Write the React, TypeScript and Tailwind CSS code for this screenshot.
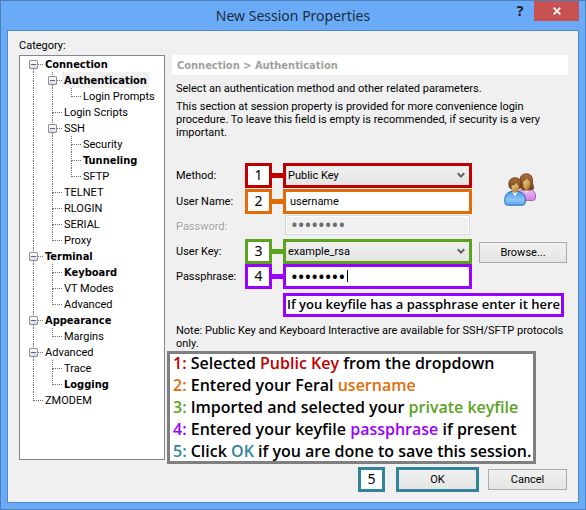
import type { ReactNode } from "react";

type Node = { label: string; bold?: boolean; selected?: boolean; children?: Node[] };
type Guide = "none" | "pass" | "tee" | "elbow";

const tree: Node[] = [
  {
    label: "Connection",
    bold: true,
    children: [
      { label: "Authentication", bold: true, selected: true, children: [{ label: "Login Prompts" }] },
      { label: "Login Scripts" },
      { label: "SSH", children: [{ label: "Security" }, { label: "Tunneling", bold: true }, { label: "SFTP" }] },
      { label: "TELNET" },
      { label: "RLOGIN" },
      { label: "SERIAL" },
      { label: "Proxy" },
    ],
  },
  {
    label: "Terminal",
    bold: true,
    children: [{ label: "Keyboard", bold: true }, { label: "VT Modes" }, { label: "Advanced" }],
  },
  { label: "Appearance", bold: true, children: [{ label: "Margins" }] },
  { label: "Advanced", children: [{ label: "Trace" }, { label: "Logging", bold: true }] },
  { label: "ZMODEM" },
];

function GuideCell({ kind, top, expandable, label }: { kind: Guide; top?: boolean; expandable?: boolean; label?: string }) {
  const upper = kind !== "none" && !top ? "border-l" : "";
  const branch = kind === "tee" || kind === "elbow" ? "border-b" : "";
  const lower = kind === "pass" || kind === "tee" ? "border-l" : "";
  return (
    <span className="relative flex w-[19px] shrink-0 flex-col pl-[9px]">
      <span className={`h-[9px] border-dotted border-[#707070] ${upper} ${branch}`} />
      <span className={`h-[7px] border-dotted border-[#707070] ${lower}`} />
      {expandable && (
        <button
          type="button"
          aria-label={`Collapse ${label}`}
          className="absolute top-1 left-[5px] flex size-[9px] items-center justify-center rounded-[1px] border border-[#919191] bg-linear-to-b from-white to-[#dcdcdc]"
        >
          <span className="h-px w-[5px] bg-[#4b63a7]" />
        </button>
      )}
    </span>
  );
}

function Branch({ nodes, guides }: { nodes: Node[]; guides: Guide[] }) {
  return (
    <ul>
      {nodes.map((node, i) => {
        const last = i === nodes.length - 1;
        return (
          <li key={node.label}>
            <div className="flex h-4">
              {guides.map((g, d) => (
                <GuideCell key={d} kind={g} />
              ))}
              <GuideCell
                kind={last ? "elbow" : "tee"}
                top={guides.length === 0 && i === 0}
                expandable={!!node.children}
                label={node.label}
              />
              <button
                type="button"
                className={`px-0.5 pt-0.5 leading-[14px] whitespace-nowrap ${node.bold ? "font-['DejaVu_Sans_Condensed',sans-serif] font-bold" : ""} ${node.selected ? "bg-[#f0f0f0]" : ""}`}
              >
                {node.label}
              </button>
            </div>
            {node.children && <Branch nodes={node.children} guides={[...guides, last ? "none" : "pass"]} />}
          </li>
        );
      })}
    </ul>
  );
}

function Step({ n, border, line }: { n: number; border: string; line: string }) {
  return (
    <div className="flex items-center">
      <span
        className={`flex h-[25px] w-[27px] items-center justify-center border-3 bg-white pb-0.5 font-['Noto_Sans',sans-serif] text-sm text-black ${border}`}
      >
        {n}
      </span>
      <span className={`h-[5px] w-[11px] ${line}`} />
    </div>
  );
}

function Dropdown({ id, value, border }: { id: string; value: string; border: string }) {
  return (
    <div className={`relative h-[25px] border-3 ${border}`}>
      <select
        id={id}
        defaultValue={value}
        className="block h-full w-full appearance-none bg-linear-to-b from-[#f0f0f0] to-[#e4e4e4] pl-0.5 outline-none"
      >
        <option>{value}</option>
      </select>
      <svg viewBox="0 0 8 7" className="pointer-events-none absolute top-1.5 right-1 h-[7px] w-2" aria-hidden="true">
        <path d="M0.8 1.2 L4 4.6 L7.2 1.2" fill="none" stroke="#606060" strokeWidth="2" />
      </svg>
    </div>
  );
}

function UsersIcon() {
  return (
    <svg viewBox="0 0 34 34" className="h-[34px] w-[34px]" aria-hidden="true">
      <defs>
        <linearGradient id="blue" x1="0" y1="0" x2="0" y2="1">
          <stop offset="0" stopColor="#4a94e0" />
          <stop offset="0.6" stopColor="#8cc6f6" />
          <stop offset="1" stopColor="#5aa2e6" />
        </linearGradient>
        <linearGradient id="pink" x1="0" y1="0" x2="0" y2="1">
          <stop offset="0" stopColor="#eebcf2" />
          <stop offset="1" stopColor="#cc80e0" />
        </linearGradient>
        <linearGradient id="face" x1="0" y1="0" x2="0.6" y2="1">
          <stop offset="0" stopColor="#f6dc9c" />
          <stop offset="1" stopColor="#b98430" />
        </linearGradient>
        <linearGradient id="hair" x1="0" y1="0" x2="0" y2="1">
          <stop offset="0" stopColor="#a8703e" />
          <stop offset="1" stopColor="#74421e" />
        </linearGradient>
      </defs>
      <path d="M14 27.500 V20 Q15 17 19 16.500 L26 16.500 Q31 17.500 31.500 22 V25.500 Q31 27.500 28.500 27.500z" fill="url(#pink)" stroke="#a862c0" />
      <path d="M20.500 16.500 L22.500 20.500 L24.500 16.500z" fill="#fcf0fe" />
      <path d="M16 9 C15.500 3.500 18 0.800 22.500 0.800 C27 0.800 28.500 4 28.500 8 C28.500 12 30 13.500 29.500 16 L26 17 H19 L16.500 15z" fill="url(#hair)" stroke="#69391a" strokeWidth=".8" />
      <path d="M19 8.500 Q22 8 23 5 Q24 8 26 8.500 V11.500 Q25.500 16.500 22.500 17 Q19.500 16.500 19 11.500z" fill="url(#face)" stroke="#9c6a28" strokeWidth=".5" />
      <path d="M0.800 29.500 V26 Q1 20 7 18.500 H15 Q21 20 21.300 26 V29.500 Q21 32.200 18.500 32.200 H3.500 Q1 32.200 0.800 29.500z" fill="url(#blue)" stroke="#2a6cb8" />
      <path d="M8 18.500 L11 23.500 L14 18.500z" fill="#e4f2fe" />
      <path d="M5.500 14.500 C3.500 8.500 6 4.800 11 4.800 C16.500 4.800 18 9 16.500 14.500 L15 16 H7z" fill="url(#hair)" stroke="#69391a" strokeWidth=".8" />
      <path d="M7.500 12.500 Q11 12.500 12.500 9.500 Q13.500 12 15 12.500 V14.500 Q14.500 19.200 11 19.500 Q7.800 19.200 7.500 14.500z" fill="url(#face)" stroke="#9c6a28" strokeWidth=".5" />
    </svg>
  );
}

function Note({ n, color, children }: { n: number; color: string; children: ReactNode }) {
  return (
    <li className="whitespace-nowrap">
      <span className={color}>{n}:</span> {children}
    </li>
  );
}

const pushButton = "h-[21px] border border-[#acacac] bg-linear-to-b from-[#f0f0f0] to-[#e5e5e5]";

export default function App() {
  return (
    <div className="flex min-h-screen flex-col border border-[#4d80ba] bg-[#6aabf7] px-1.5 pb-1.5 font-[Roboto,sans-serif] text-[11px] leading-[13px] text-black">
      <header className="relative flex h-[29px] items-center justify-center">
        <h1 className="font-['Noto_Sans',sans-serif] text-sm text-[#1e2b3c]">New Session Properties</h1>
        <div className="absolute top-0 right-0 flex">
          <button
            type="button"
            aria-label="Help"
            className="h-5 w-7 font-['Noto_Sans',sans-serif] text-sm leading-5 font-bold text-[#1e1e1e]"
          >
            ?
          </button>
          <button type="button" aria-label="Close" className="flex h-5 w-[45px] items-center justify-center bg-[#c75050]">
            <svg viewBox="0 0 8 8" className="size-2" aria-hidden="true">
              <path d="M0.700 0.700 L7.300 7.300 M7.300 0.700 L0.700 7.300" stroke="#fff" strokeWidth="1.800" />
            </svg>
          </button>
        </div>
      </header>

      <main className="flex flex-1 flex-col border border-[#5088c8] bg-[#f0f0f0] pt-2 pr-2.5 pl-[11px]">
        <h2 className="h-4">Category:</h2>
        <div className="flex gap-[7px]">
          <nav aria-label="Category" className="h-[405px] w-[146px] shrink-0 border border-[#828790] bg-white pl-1">
            <Branch nodes={tree} guides={[]} />
          </nav>

          <section className="min-w-0 flex-1">
            <h3 className="h-5 bg-white pt-0.5 pl-[5px] font-['DejaVu_Sans_Condensed',sans-serif] leading-[18px] font-bold text-[#a0a0a0]">
              Connection &gt; Authentication
            </h3>
            <div className="pl-1">
              <p className="mt-[7px]">Select an authentication method and other related parameters.</p>
              <p className="mt-[5px]">
                This section at session property is provided for more convenience login procedure. To leave this field is
                empty is recommended, if security is a very important.
              </p>

              <form className="mt-6 flex gap-[7px]">
                <div className="grid flex-1 grid-cols-[69px_38px_1fr] items-center">
                  <label htmlFor="method">Method:</label>
                  <Step n={1} border="border-[#c00000]" line="bg-[#c00000]" />
                  <Dropdown id="method" value="Public Key" border="border-[#c00000]" />

                  <label htmlFor="user" className="mt-px">User Name:</label>
                  <div className="mt-px">
                    <Step n={2} border="border-[#e36c09]" line="bg-[#e36c09]" />
                  </div>
                  <input
                    id="user"
                    defaultValue="username"
                    className="mt-px h-[25px] w-full border-3 border-[#e36c09] bg-white pl-1 outline-none"
                  />

                  <label htmlFor="password" className="text-[#a0a0a0] [text-shadow:1px_1px_0_#fff]">Password:</label>
                  <span />
                  <div className="flex h-[25px] items-start px-0.5 pt-px">
                    <input
                      id="password"
                      type="password"
                      disabled
                      defaultValue="password"
                      className="h-5 w-full border border-[#d9d9d9] bg-[#f0f0f0] pb-0.5 pl-[5px] font-['Noto_Sans',sans-serif] text-lg leading-4 text-[#6d6d6d] inset-ring inset-ring-white"
                    />
                  </div>

                  <label htmlFor="key">User Key:</label>
                  <Step n={3} border="border-[#5ba31f]" line="bg-[#5ba31f]" />
                  <Dropdown id="key" value="example_rsa" border="border-[#5ba31f]" />

                  <label htmlFor="phrase">Passphrase:</label>
                  <Step n={4} border="border-[#9900ff]" line="bg-[#9900ff]" />
                  <div className="relative">
                    <input
                      id="phrase"
                      type="password"
                      defaultValue="password"
                      className="block h-[25px] w-full border-3 border-[#9900ff] bg-white pb-0.5 pl-[5px] font-['Noto_Sans',sans-serif] text-lg leading-4 outline-none"
                    />
                    <span className="absolute top-1.5 left-16 h-3 w-px bg-black" />
                  </div>
                </div>
                <div className="w-[89px] shrink-0">
                  <div className="flex h-[79px] justify-center pt-2.5 pr-1.5">
                    <UsersIcon />
                  </div>
                  <button type="button" className={`w-[88px] ${pushButton}`}>Browse...</button>
                </div>
              </form>

              <div className="mt-1 flex justify-end pr-1">
                <p className="flex h-6 w-[281px] items-center justify-center border-3 border-[#9900ff] bg-white pb-0.5 font-['Open_Sans',sans-serif] text-[13px] font-semibold whitespace-nowrap">
                  If you keyfile has a passphrase enter it here
                </p>
              </div>

              <p className="mt-[7px]">
                Note: Public Key and Keyboard Interactive are available for SSH/SFTP protocols only.
              </p>
            </div>
            <ol className="mt-px mr-8 -ml-[5px] flex flex-col gap-[3px] border-3 border-[#7f7f7f] bg-white pl-[3px] font-['Open_Sans',sans-serif] text-base leading-[19px] font-semibold">
              <Note n={1} color="text-[#c00000]">
                Selected <span className="text-[#c00000]">Public Key</span> from the dropdown
              </Note>
              <Note n={2} color="text-[#e36c09]">
                Entered your Feral <span className="text-[#e36c09]">username</span>
              </Note>
              <Note n={3} color="text-[#5ba31f]">
                Imported and selected your <span className="text-[#5ba31f]">private keyfile</span>
              </Note>
              <Note n={4} color="text-[#9900ff]">
                Entered your keyfile <span className="text-[#9900ff]">passphrase</span> if present
              </Note>
              <Note n={5} color="text-[#31849b]">
                Click <span className="text-[#31849b]">OK</span> if you are done to save this session.
              </Note>
            </ol>
          </section>
        </div>

        <footer className="mt-[3px] flex items-center justify-end pr-px">
          <span className="mr-[11px] flex h-[25px] w-[27px] items-center justify-center border-3 border-[#31849b] bg-white pb-0.5 font-['Noto_Sans',sans-serif] text-sm">
            5
          </span>
          <button
            type="submit"
            className="mr-[9px] h-[25px] w-[83px] border-3 border-[#31849b] bg-linear-to-b from-[#f0f0f0] to-[#e5e5e5]"
          >
            OK
          </button>
          <button type="button" className={`w-[79px] ${pushButton}`}>Cancel</button>
        </footer>
      </main>
    </div>
  );
}
